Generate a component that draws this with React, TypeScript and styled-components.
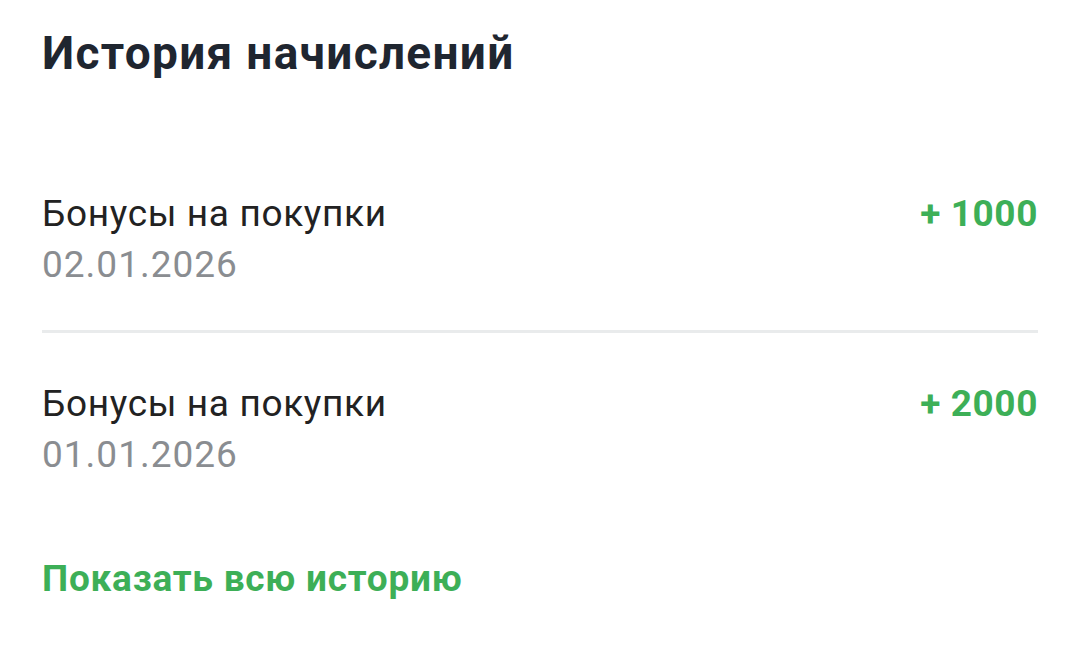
import React from 'react';
import styled, { createGlobalStyle } from 'styled-components';

const GlobalStyle = createGlobalStyle`
    body {
        margin: 0;
        background: #ffffff;
        font-family: Roboto, 'Noto Sans', sans-serif;
    }
`;

const Page = styled.div`
    display: flex;
    flex-direction: column;
    padding: 25px 42px 0 42px;
    width: 1080px;
    box-sizing: border-box;
`;

const Title = styled.h2`
    margin: 0;
    font-size: 46px;
    font-weight: 700;
    line-height: 56px;
    letter-spacing: 1.3px;
    color: #1f2630;
`;

const List = styled.div`
    display: flex;
    flex-direction: column;
    margin-top: 111px;
`;

const Row = styled.div<{ $divider?: boolean }>`
    display: flex;
    justify-content: space-between;
    align-items: flex-start;
    padding: ${p => (p.$divider ? '0 0 43px 0' : '49px 0 0 0')};
    border-bottom: ${p => (p.$divider ? '3px solid #e9ebec' : 'none')};
`;

const Info = styled.div`
    display: flex;
    flex-direction: column;
    gap: 7px;
`;

const Name = styled.div`
    font-size: 37px;
    line-height: 44px;
    letter-spacing: 0.65px;
    color: #222222;
`;

const Date = styled.div`
    font-size: 37px;
    line-height: 44px;
    letter-spacing: 1px;
    color: #8a8d91;
`;

const Amount = styled.div`
    font-size: 37px;
    line-height: 44px;
    font-weight: 700;
    letter-spacing: 0.6px;
    color: #3daf57;
`;

const ShowAll = styled.a`
    margin-top: 80px;
    font-size: 37px;
    line-height: 44px;
    font-weight: 700;
    letter-spacing: 0.75px;
    color: #3daf57;
    text-decoration: none;
`;

type Entry = {
    title: string,
    date: string,
    amount: string,
}

const entries: Entry[] = [
    { title: 'Бонусы на покупки', date: '02.01.2026', amount: '+ 1000' },
    { title: 'Бонусы на покупки', date: '01.01.2026', amount: '+ 2000' },
];

const App: React.FC = () => {
    return (
        <Page>
            <GlobalStyle />
            <Title>История начислений</Title>
            <List>
                {entries.map((e, i) => (
                    <Row key={i} $divider={i < entries.length - 1}>
                        <Info>
                            <Name>{e.title}</Name>
                            <Date>{e.date}</Date>
                        </Info>
                        <Amount>{e.amount}</Amount>
                    </Row>
                ))}
            </List>
            <ShowAll href="#">Показать всю историю</ShowAll>
        </Page>
    );
}

export default App;
